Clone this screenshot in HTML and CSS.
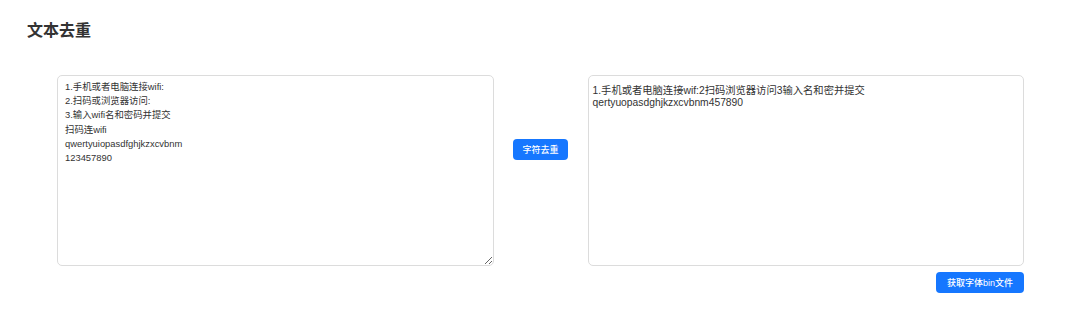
FILE: index.html
```html
<!DOCTYPE html>
<html lang="zh-CN">
<head>
    <meta charset="UTF-8">
    <meta name="viewport" content="width=device-width, initial-scale=1.0">
    <title>文本去重</title>
    <link rel="stylesheet" href="styles.css">
</head>
<body>
    <div class="page">
        <h2 class="title">文本去重</h2>

        <div class="workspace">
            <textarea class="source" id="source">1.手机或者电脑连接wifi:
2.扫码或浏览器访问:
3.输入wifi名和密码并提交
扫码连wifi
qwertyuiopasdfghjkzxcvbnm
123457890</textarea>

            <div class="middle">
                <button class="btn">字符去重</button>
            </div>

            <div class="result-col">
                <textarea class="result" id="result">1.手机或者电脑连接wif:2扫码浏览器访问3输入名和密并提交
qertyuopasdghjkzxcvbnm457890</textarea>
                <div class="actions">
                    <button class="btn btn-wide">获取字体bin文件</button>
                </div>
            </div>
        </div>
    </div>
</body>
</html>
```

FILE: styles.css
```css
body {
    margin: 0;
    background-color: #ffffff;
    font-family: "Liberation Sans", "Noto Sans CJK SC", sans-serif;
    color: #333;
}

.page {
    padding: 0 56px 0 27px;
}

.title {
    margin: 0;
    padding-top: 20px;
    font-size: 16px;
    line-height: 22px;
    font-weight: bold;
    color: #333;
}

.workspace {
    display: grid;
    grid-template-columns: minmax(0, 1fr) 94px minmax(0, 1fr);
    align-items: start;
    margin-top: 33px;
    padding-left: 30px;
}

textarea {
    box-sizing: border-box;
    width: 100%;
    height: 191px;
    margin: 0;
    border: 1px solid #dcdcdc;
    border-radius: 5px;
    font-family: "Liberation Sans", "Noto Sans CJK SC", sans-serif;
    color: #333;
    resize: vertical;
    outline: none;
    display: block;
}

.source {
    padding: 4px 7px;
    font-size: 9.4px;
    line-height: 14.2px;
}

.middle {
    display: flex;
    justify-content: center;
    padding-top: 64px;
}

.result-col {
    display: flex;
    flex-direction: column;
}

.result {
    padding: 9px 4px 8px;
    font-size: 10.3px;
    line-height: 12.4px;
    resize: none;
}

.actions {
    display: flex;
    justify-content: flex-end;
    margin-top: 6px;
}

.btn {
    height: 21px;
    padding: 0 9px;
    background-color: #1677ff;
    color: #ffffff;
    border: none;
    border-radius: 4px;
    font-family: "Liberation Sans", "Noto Sans CJK SC", sans-serif;
    font-size: 9px;
    font-weight: 500;
    cursor: pointer;
}

.btn-wide {
    padding: 0 11px;
}

.btn:hover {
    background-color: #0958d9;
}
```
